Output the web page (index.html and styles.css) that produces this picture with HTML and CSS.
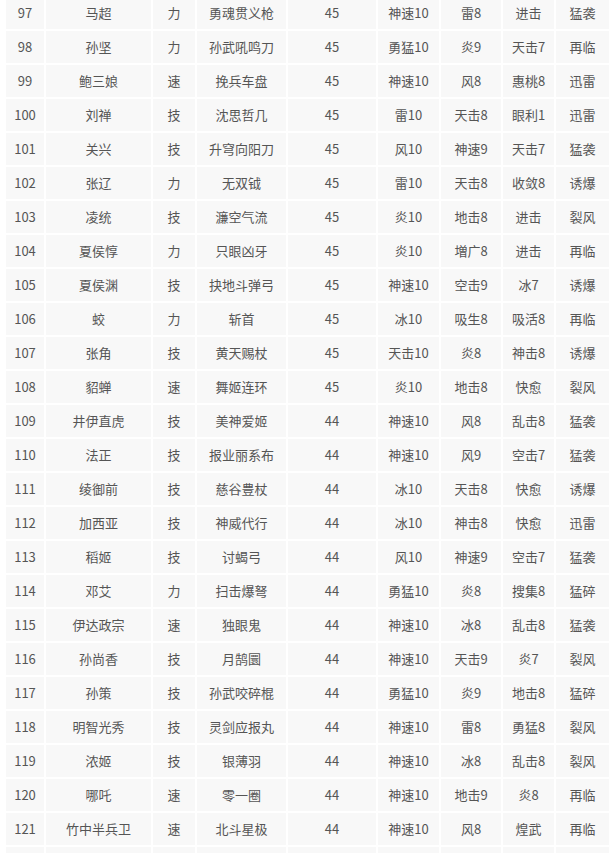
FILE: index.html
```html
<!DOCTYPE html>
<html lang="zh-CN">
<head>
<meta charset="utf-8">
<title>武器表</title>
<link rel="stylesheet" href="styles.css">
</head>
<body>
<div class="wrap">
<table class="grid">
<colgroup>
<col class="c1"><col class="c2"><col class="c3"><col class="c4"><col class="c5"><col class="c6"><col class="c7"><col class="c8"><col class="c9">
</colgroup>
<tbody>
<tr><td>97</td><td>马超</td><td>力</td><td>勇魂贯义枪</td><td>45</td><td>神速10</td><td>雷8</td><td>进击</td><td>猛袭</td></tr>
<tr><td>98</td><td>孙坚</td><td>力</td><td>孙武吼鸣刀</td><td>45</td><td>勇猛10</td><td>炎9</td><td>天击7</td><td>再临</td></tr>
<tr><td>99</td><td>鲍三娘</td><td>速</td><td>挽兵车盘</td><td>45</td><td>神速10</td><td>风8</td><td>惠桃8</td><td>迅雷</td></tr>
<tr><td>100</td><td>刘禅</td><td>技</td><td>沈思哲几</td><td>45</td><td>雷10</td><td>天击8</td><td>眼利1</td><td>迅雷</td></tr>
<tr><td>101</td><td>关兴</td><td>技</td><td>升穹向阳刀</td><td>45</td><td>风10</td><td>神速9</td><td>天击7</td><td>猛袭</td></tr>
<tr><td>102</td><td>张辽</td><td>力</td><td>无双钺</td><td>45</td><td>雷10</td><td>天击8</td><td>收敛8</td><td>诱爆</td></tr>
<tr><td>103</td><td>凌统</td><td>技</td><td>濂空气流</td><td>45</td><td>炎10</td><td>地击8</td><td>进击</td><td>裂风</td></tr>
<tr><td>104</td><td>夏侯惇</td><td>力</td><td>只眼凶牙</td><td>45</td><td>炎10</td><td>増广8</td><td>进击</td><td>再临</td></tr>
<tr><td>105</td><td>夏侯渊</td><td>技</td><td>抉地斗弹弓</td><td>45</td><td>神速10</td><td>空击9</td><td>冰7</td><td>诱爆</td></tr>
<tr><td>106</td><td>蛟</td><td>力</td><td>斩首</td><td>45</td><td>冰10</td><td>吸生8</td><td>吸活8</td><td>再临</td></tr>
<tr><td>107</td><td>张角</td><td>技</td><td>黄天赐杖</td><td>45</td><td>天击10</td><td>炎8</td><td>神击8</td><td>诱爆</td></tr>
<tr><td>108</td><td>貂蝉</td><td>速</td><td>舞姬连环</td><td>45</td><td>炎10</td><td>地击8</td><td>快愈</td><td>裂风</td></tr>
<tr><td>109</td><td>井伊直虎</td><td>技</td><td>美神爱姬</td><td>44</td><td>神速10</td><td>风8</td><td>乱击8</td><td>猛袭</td></tr>
<tr><td>110</td><td>法正</td><td>技</td><td>报业丽系布</td><td>44</td><td>神速10</td><td>风9</td><td>空击7</td><td>猛袭</td></tr>
<tr><td>111</td><td>绫御前</td><td>技</td><td>慈谷豊杖</td><td>44</td><td>冰10</td><td>天击8</td><td>快愈</td><td>诱爆</td></tr>
<tr><td>112</td><td>加西亚</td><td>技</td><td>神威代行</td><td>44</td><td>冰10</td><td>神击8</td><td>快愈</td><td>迅雷</td></tr>
<tr><td>113</td><td>稻姬</td><td>技</td><td>讨蝎弓</td><td>44</td><td>风10</td><td>神速9</td><td>空击7</td><td>猛袭</td></tr>
<tr><td>114</td><td>邓艾</td><td>力</td><td>扫击爆弩</td><td>44</td><td>勇猛10</td><td>炎8</td><td>搜集8</td><td>猛碎</td></tr>
<tr><td>115</td><td>伊达政宗</td><td>速</td><td>独眼鬼</td><td>44</td><td>神速10</td><td>冰8</td><td>乱击8</td><td>猛袭</td></tr>
<tr><td>116</td><td>孙尚香</td><td>技</td><td>月鹄圜</td><td>44</td><td>神速10</td><td>天击9</td><td>炎7</td><td>裂风</td></tr>
<tr><td>117</td><td>孙策</td><td>技</td><td>孙武咬碎棍</td><td>44</td><td>勇猛10</td><td>炎9</td><td>地击8</td><td>猛碎</td></tr>
<tr><td>118</td><td>明智光秀</td><td>技</td><td>灵剑应报丸</td><td>44</td><td>神速10</td><td>雷8</td><td>勇猛8</td><td>裂风</td></tr>
<tr><td>119</td><td>浓姬</td><td>技</td><td>银薄羽</td><td>44</td><td>神速10</td><td>冰8</td><td>乱击8</td><td>裂风</td></tr>
<tr><td>120</td><td>哪吒</td><td>速</td><td>零一圈</td><td>44</td><td>神速10</td><td>地击9</td><td>炎8</td><td>再临</td></tr>
<tr><td>121</td><td>竹中半兵卫</td><td>速</td><td>北斗星极</td><td>44</td><td>神速10</td><td>风8</td><td>煌武</td><td>再临</td></tr>
<tr><td></td><td></td><td></td><td></td><td></td><td></td><td></td><td></td><td></td></tr>
</tbody>
</table>
</div>
</body>
</html>
```
FILE: styles.css
```css
html, body {
  margin: 0;
  padding: 0;
  background: #ffffff;
}
.wrap {
  overflow: hidden;
  padding-left: 4px;
}
.grid {
  margin-top: -5px;
  width: 607px;
  table-layout: fixed;
  border-collapse: separate;
  border-spacing: 2px;
  font-family: "Noto Sans CJK SC", "Noto Sans", sans-serif;
  font-size: 13px;
  color: #555555;
}
.grid td {
  height: 32px;
  padding: 0;
  background: #f8f8f8;
  text-align: center;
  vertical-align: middle;
  white-space: nowrap;
  overflow: hidden;
  line-height: 32px;
}
.c1 { width: 38px; }
.c2 { width: 105px; }
.c3 { width: 42px; }
.c4 { width: 89px; }
.c5 { width: 88px; }
.c6 { width: 61px; }
.c7 { width: 60px; }
.c8 { width: 51px; }
.c9 { width: 53px; }
```
